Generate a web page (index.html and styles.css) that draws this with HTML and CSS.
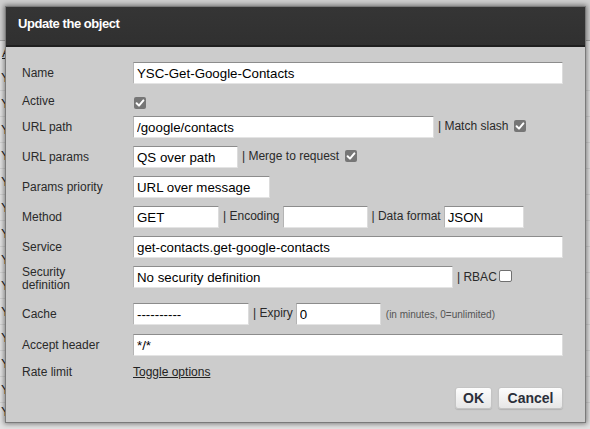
FILE: index.html
```html
<!DOCTYPE html>
<html>
<head>
<meta charset="utf-8">
<link rel="stylesheet" href="styles.css">
</head>
<body>
<div class="page">
  <div class="page-top"></div>
  <div class="page-link">A</div>
  <div class="page-row">Y</div>
  <div class="page-row">Y</div>
  <div class="page-row">Y</div>
  <div class="page-row">Y</div>
  <div class="page-row">Y</div>
  <div class="page-row">Y</div>
  <div class="page-row">Y</div>
  <div class="page-row">Y</div>
  <div class="page-row">Y</div>
  <div class="page-row">Y</div>
  <div class="page-row">Y</div>
  <div class="page-row">Y</div>
  <div class="page-row">Y</div>
  <div class="page-row page-last">You can select and update objects from this list</div>
</div>

<div class="dialog">
  <div class="dialog-title">Update the object</div>
  <div class="dialog-body">
    <div class="row">
      <span class="lbl">Name</span>
      <input class="in grow" type="text" value="YSC-Get-Google-Contacts">
    </div>
    <div class="row row-active">
      <span class="lbl lbl-up">Active</span>
      <span class="cb cb-on"><svg viewBox="0 0 12 12" width="12" height="12"><path d="M2.6 6.3 L5 8.6 L9.4 3.4" fill="none" stroke="#fff" stroke-width="2" stroke-linecap="round" stroke-linejoin="round"/></svg></span>
    </div>
    <div class="row">
      <span class="lbl">URL path</span>
      <input class="in w-path" type="text" value="/google/contacts">
      <span class="aux">| Match slash</span>
      <span class="cb cb-on cb-after"><svg viewBox="0 0 12 12" width="12" height="12"><path d="M2.6 6.3 L5 8.6 L9.4 3.4" fill="none" stroke="#fff" stroke-width="2" stroke-linecap="round" stroke-linejoin="round"/></svg></span>
    </div>
    <div class="row">
      <span class="lbl">URL params</span>
      <input class="in w-params" type="text" value="QS over path">
      <span class="aux">| Merge to request</span>
      <span class="cb cb-on cb-after"><svg viewBox="0 0 12 12" width="12" height="12"><path d="M2.6 6.3 L5 8.6 L9.4 3.4" fill="none" stroke="#fff" stroke-width="2" stroke-linecap="round" stroke-linejoin="round"/></svg></span>
    </div>
    <div class="row">
      <span class="lbl">Params priority</span>
      <input class="in w-prio" type="text" value="URL over message">
    </div>
    <div class="row">
      <span class="lbl">Method</span>
      <input class="in w-method" type="text" value="GET">
      <span class="aux">| Encoding</span>
      <input class="in w-enc after-aux" type="text" value="">
      <span class="aux">| Data format</span>
      <input class="in w-fmt after-aux-tight" type="text" value="JSON">
    </div>
    <div class="row">
      <span class="lbl">Service</span>
      <input class="in grow" type="text" value="get-contacts.get-google-contacts">
    </div>
    <div class="row row-sec">
      <span class="lbl lbl-two">Security<br>definition</span>
      <input class="in w-sec" type="text" value="No security definition">
      <span class="aux aux-sec">| RBAC</span>
      <span class="cb cb-off"></span>
    </div>
    <div class="row row-cache">
      <span class="lbl">Cache</span>
      <input class="in w-cache" type="text" value="----------">
      <span class="aux">| Expiry</span>
      <input class="in w-exp after-aux-tight" type="text" value="0">
      <span class="hint">(in minutes, 0=unlimited)</span>
    </div>
    <div class="row">
      <span class="lbl">Accept header</span>
      <input class="in grow" type="text" value="*/*">
    </div>
    <div class="row row-rate">
      <span class="lbl">Rate limit</span>
      <a class="toggle" href="#">Toggle options</a>
    </div>
    <div class="buttons">
      <button class="btn btn-ok" type="button">OK</button>
      <button class="btn btn-cancel" type="button">Cancel</button>
    </div>
  </div>
</div>
</body>
</html>
```

FILE: styles.css
```css
html, body {
  margin: 0;
  padding: 0;
}

body {
  width: 590px;
  height: 429px;
  overflow: hidden;
  position: relative;
  background: #e2e2e2;
  font-family: "Liberation Sans", Arial, sans-serif;
}

.page {
  height: 429px;
  overflow: hidden;
}

.page-top {
  height: 40px;
  background: #cfcfcf;
  border-bottom: 1px solid #a8a8a8;
}

.page-link {
  height: 24px;
  line-height: 24px;
  font-size: 13px;
  padding-left: 2px;
  color: #222;
  text-decoration: underline;
}

.page-row {
  height: 26px;
  line-height: 26px;
  font-size: 13px;
  padding-left: 1px;
  color: #222;
  white-space: nowrap;
  border-bottom: 1px solid #d2d2d2;
  box-sizing: border-box;
}

.page-last {
  height: 18px;
  line-height: 18px;
  border-bottom: 0;
}

.dialog {
  position: absolute;
  left: 5px;
  top: 6px;
  width: 581px;
  height: 417px;
  box-sizing: border-box;
  border: 1px solid #7a7a7a;
  background: #cccccc;
  box-shadow: 0 0 5px 1px rgba(0, 0, 0, 0.45);
  display: flex;
  flex-direction: column;
}

.dialog-title {
  height: 40px;
  box-sizing: border-box;
  padding: 9px 0 0 12px;
  line-height: 16px;
  background: linear-gradient(#353535, #303030);
  border-bottom: 2px solid #1f1f1f;
  color: #ffffff;
  font-weight: bold;
  font-size: 13px;
  letter-spacing: -0.45px;
}

.dialog-body {
  padding: 15px 22px 0 16px;
  display: flex;
  flex-direction: column;
}

.row {
  display: flex;
  align-items: center;
  height: 22px;
  margin-bottom: 8px;
  font-size: 12px;
  color: #2a2a2a;
}

.row-active {
  margin-bottom: 2px;
}

.row-sec {
  height: 29px;
  align-items: flex-start;
}

.row-cache {
  margin-bottom: 9px;
}

.row-rate {
  height: 16px;
  margin-bottom: 7px;
}

.lbl {
  width: 111px;
  flex: none;
  font-size: 12px;
  color: #2a2a2a;
}

.lbl-up {
  position: relative;
  top: -2px;
}

.lbl-two {
  line-height: 13px;
}

.in {
  box-sizing: border-box;
  height: 22px;
  margin: 0;
  padding: 0 3px;
  border: 1px solid;
  border-color: #8c8c8c #dcdcdc #e4e4e4 #b4b4b4;
  background: #ffffff;
  font-family: "Liberation Sans", Arial, sans-serif;
  font-size: 13.3px;
  color: #000;
  outline: none;
  flex: none;
}

.grow { flex: 1; min-width: 0; }
.w-path { width: 301px; }
.w-params { width: 105px; }
.w-prio { width: 137px; }
.w-method { width: 86px; }
.w-enc { width: 85px; }
.w-fmt { width: 80px; }
.w-sec { width: 320px; }
.w-cache { width: 116px; }
.w-exp { width: 85px; }

.aux {
  margin-left: 4px;
  font-size: 12px;
  color: #2a2a2a;
  position: relative;
  top: -1px;
}

.aux-sec {
  margin-top: 4px;
  top: 0;
}

.after-aux { margin-left: 3px; }
.after-aux-tight { margin-left: 3px; }

.cb {
  width: 12px;
  height: 12px;
  box-sizing: border-box;
  border-radius: 2px;
  display: inline-flex;
  flex: none;
}

.cb-on {
  background: #767676;
  margin-left: 1px;
}

.cb-after {
  margin-left: 6px;
  position: relative;
  top: -1px;
}

.cb-off {
  width: 13px;
  height: 12px;
  margin-left: 2px;
  margin-top: 4px;
  background: #ffffff;
  border: 1px solid #707070;
}

.hint {
  margin-left: 5px;
  font-size: 10px;
  color: #555555;
}

.toggle {
  font-size: 12px;
  color: #222;
  text-decoration: underline;
}

.buttons {
  display: flex;
  justify-content: flex-end;
  gap: 6px;
}

.btn {
  height: 22px;
  box-sizing: border-box;
  margin: 0;
  padding: 0;
  border: 1px solid #c4c4c4;
  border-radius: 3px;
  background: linear-gradient(#fdfdfd, #e6e6e6);
  box-shadow: 0 1px 1px rgba(0, 0, 0, 0.12);
  font-family: "Liberation Sans", Arial, sans-serif;
  font-weight: bold;
  font-size: 14px;
  color: #2b2f3a;
}

.btn-ok { width: 37px; }
.btn-cancel { width: 65px; }
```
